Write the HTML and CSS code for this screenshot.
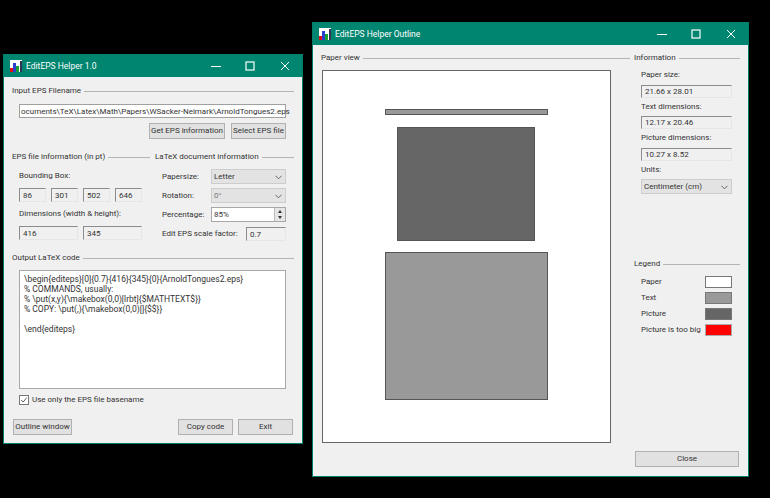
FILE: index.html
```html
<!DOCTYPE html>
<html lang="en">
<head>
  <meta charset="UTF-8">
  <title>EditEPS Helper</title>
  <link rel="stylesheet" href="styles.css">
</head>
<body>
  <svg width="0" height="0" class="defs">
    <symbol id="appIcon" viewBox="0 0 12 12">
      <rect width="12" height="12" fill="#fff"/>
      <rect x="0" y="8" width="4" height="4" fill="#e01010"/>
      <rect x="3" y="3" width="3" height="9" fill="#2a3fd0"/>
      <rect x="6" y="6" width="3" height="6" fill="#18a030"/>
      <rect x="10" y="1" width="2" height="11" fill="#335"/>
    </symbol>
    <symbol id="winMin" viewBox="0 0 10 10"><path d="M0 5.5h10" stroke="#fff" fill="none"/></symbol>
    <symbol id="winMax" viewBox="0 0 10 10"><rect x="1" y="1" width="8" height="8" stroke="#fff" stroke-width="1.2" fill="none"/></symbol>
    <symbol id="winClose" viewBox="0 0 10 10"><path d="M1 1l8 8M9 1l-8 8" stroke="#fff" fill="none"/></symbol>
    <symbol id="chevron" viewBox="0 0 8 5"><path d="M.5 .5l3.5 3.5 3.5-3.5" stroke="#555" fill="none"/></symbol>
  </svg>

  <div class="window main-window">
    <div class="titlebar">
      <svg class="app-icon"><use href="#appIcon"/></svg>
      <span class="title">EditEPS Helper 1.0</span>
      <span class="win-btn"><svg><use href="#winMin"/></svg></span>
      <span class="win-btn"><svg><use href="#winMax"/></svg></span>
      <span class="win-btn"><svg><use href="#winClose"/></svg></span>
    </div>
    <div class="main-body">
      <div class="group-title"><span>Input EPS Filename</span></div>
      <div class="file-input">ocuments\TeX\Latex\Math\Papers\WSacker-Neimark\ArnoldTongues2.eps</div>
      <div class="file-buttons">
        <button class="btn btn-info">Get EPS information</button>
        <button class="btn btn-select">Select EPS file</button>
      </div>

      <div class="info-cols">
        <div>
          <div class="group-title"><span>EPS file information (in pt)</span></div>
          <div class="indent">
            <div class="label bbox-label">Bounding Box:</div>
            <div class="field-row four">
              <div class="field">86</div>
              <div class="field">301</div>
              <div class="field">502</div>
              <div class="field">646</div>
            </div>
            <div class="label dim-label">Dimensions (width &amp; height):</div>
            <div class="field-row two">
              <div class="field">416</div>
              <div class="field">345</div>
            </div>
          </div>
        </div>
        <div>
          <div class="group-title"><span>LaTeX document information</span></div>
          <div class="doc-form">
            <div class="label">Papersize:</div>
            <div class="combo">Letter<svg class="chev"><use href="#chevron"/></svg></div>
            <div class="label">Rotation:</div>
            <div class="combo combo-off">0°<svg class="chev"><use href="#chevron"/></svg></div>
            <div class="label">Percentage:</div>
            <div class="spin">85%
              <span class="spin-arrows"><span class="up"></span><span class="down"></span></span>
            </div>
            <div class="label">Edit EPS scale factor:</div>
            <div class="field scale">0.7</div>
          </div>
        </div>
      </div>

      <div class="group-title output-title"><span>Output LaTeX code</span></div>
      <pre class="code">\begin{editeps}[0]{0.7}{416}{345}{0}{ArnoldTongues2.eps}
% COMMANDS, usually:
% \put(x,y){\makebox(0,0)[lrbt]{$MATHTEXT$}}
% COPY: \put(,){\makebox(0,0)[]{$$}}

\end{editeps}</pre>
      <div class="check-row">
        <span class="checkbox"><svg viewBox="0 0 10 10"><path d="M1.5 5l2.5 2.5 4.5-5.5" stroke="#333" fill="none"/></svg></span>
        Use only the EPS file basename
      </div>
      <div class="main-footer">
        <button class="btn btn-outline">Outline window</button>
        <button class="btn btn-action push">Copy code</button>
        <button class="btn btn-action">Exit</button>
      </div>
    </div>
  </div>

  <div class="window outline-window">
    <div class="titlebar">
      <svg class="app-icon"><use href="#appIcon"/></svg>
      <span class="title">EditEPS Helper Outline</span>
      <span class="win-btn"><svg><use href="#winMin"/></svg></span>
      <span class="win-btn"><svg><use href="#winMax"/></svg></span>
      <span class="win-btn"><svg><use href="#winClose"/></svg></span>
    </div>
    <div class="outline-body">
      <div>
        <div class="group-title"><span>Paper view</span></div>
        <div class="paper">
          <div class="shape text-strip"></div>
          <div class="shape picture-box"></div>
          <div class="shape text-box"></div>
        </div>
      </div>
      <div class="side">
        <div class="group-title"><span>Information</span></div>
        <div class="side-inner">
          <div class="label side-label">Paper size:</div>
          <div class="field side-field">21.66 x 28.01</div>
          <div class="label side-label">Text dimensions:</div>
          <div class="field side-field">12.17 x 20.46</div>
          <div class="label side-label">Picture dimensions:</div>
          <div class="field side-field">10.27 x 8.52</div>
          <div class="label side-label">Units:</div>
          <div class="combo side-field">Centimeter (cm)<svg class="chev"><use href="#chevron"/></svg></div>
        </div>
        <div class="group-title legend-title"><span>Legend</span></div>
        <div class="side-inner legend">
          <div class="legend-row">Paper<span class="swatch sw-paper"></span></div>
          <div class="legend-row">Text<span class="swatch sw-text"></span></div>
          <div class="legend-row">Picture<span class="swatch sw-picture"></span></div>
          <div class="legend-row">Picture is too big<span class="swatch sw-big"></span></div>
        </div>
        <button class="btn btn-close">Close</button>
      </div>
    </div>
  </div>
</body>
</html>
```

FILE: styles.css
```css
* {
  box-sizing: border-box;
}
html, body {
  height: 100%;
}
body {
  margin: 0;
  background-color: #000;
  color: #333;
  font-family: Roboto, Arial, sans-serif;
  font-size: 8px;
  line-height: 12px;
  overflow: hidden;
}
.defs {
  position: absolute;
}

/* windows sit on the desktop */
.window {
  position: absolute;
  display: flex;
  flex-direction: column;
  background-color: #f0f0f0;
  border: 1px solid #00806c;
}
.main-window {
  left: 3px;
  top: 54px;
  width: 300px;
  height: 390px;
}
.outline-window {
  left: 312px;
  top: 22px;
  width: 437px;
  height: 455px;
}
.titlebar {
  display: flex;
  align-items: center;
  flex: none;
  height: 22px;
  padding-left: 6px;
  background-color: #008570;
  color: #fff;
}
.app-icon {
  width: 12px;
  height: 12px;
  margin-right: 4px;
}
.title {
  flex: 1;
  font-size: 8.5px;
}
.win-btn {
  display: flex;
  align-items: center;
  justify-content: center;
  width: 34.5px;
}
.win-btn svg {
  width: 10px;
  height: 10px;
}

.group-title {
  display: flex;
  align-items: center;
  height: 12px;
  gap: 3px;
  white-space: nowrap;
}
.group-title::after {
  content: "";
  flex: 1;
  height: 1px;
  background-color: #b4b4b4;
}

.label {
  white-space: nowrap;
}
.field {
  height: 14px;
  padding: 0 3px;
  line-height: 13px;
  background-color: #f0f0f0;
  border: 1px solid #e6e6e6;
  border-top: 1px solid #8c8c8c;
  border-left: 1px solid #8c8c8c;
  white-space: nowrap;
}
.combo {
  position: relative;
  height: 15px;
  padding-left: 2px;
  line-height: 14px;
  background-color: #e3e3e3;
  border: 1px solid #cdcdcd;
}
.combo-off {
  color: #777;
}
.chev {
  position: absolute;
  right: 3px;
  top: 5px;
  width: 7px;
  height: 5px;
}
.btn {
  height: 16px;
  padding: 0;
  font-family: inherit;
  font-size: 8px;
  line-height: 12px;
  white-space: nowrap;
  color: #333;
  background-color: #e1e1e1;
  border: 1px solid #b0b0b0;
}

.main-body {
  flex: 1;
  padding: 8px 8px 0;
}
.file-input {
  height: 14px;
  margin: 7px 8px 0 7px;
  padding-left: 1px;
  line-height: 13px;
  background-color: #fff;
  border: 1px solid #a0a0a0;
  white-space: nowrap;
}
.file-buttons {
  display: flex;
  justify-content: flex-end;
  gap: 6px;
  margin: 5px 8px 0 0;
}
.btn-info {
  width: 76px;
}
.btn-select {
  width: 55px;
}
.info-cols {
  display: grid;
  grid-template-columns: 138px 139px;
  gap: 5px;
  margin-top: 12px;
}
.indent {
  padding-left: 7px;
}
.bbox-label {
  margin-top: 7px;
}
.dim-label {
  margin-top: 6px;
}
.field-row {
  display: grid;
  gap: 5px;
  width: 123px;
  margin-top: 6px;
}
.four {
  grid-template-columns: repeat(4, 1fr);
}
.two {
  grid-template-columns: repeat(2, 1fr);
}
.doc-form {
  display: grid;
  grid-template-columns: 49px 75px;
  grid-auto-rows: 15px;
  row-gap: 4px;
  align-items: center;
  margin: 6px 0 0 7px;
}
.spin {
  position: relative;
  height: 15px;
  padding-left: 2px;
  line-height: 14px;
  background-color: #fff;
  border: 1px solid #a8a8a8;
}
.spin-arrows {
  position: absolute;
  right: 0;
  top: 0;
  display: flex;
  flex-direction: column;
  width: 11px;
  height: 13px;
  background-color: #e6e6e6;
  border-left: 1px solid #bbb;
}
.spin-arrows span {
  flex: 1;
  position: relative;
}
.spin-arrows span::after {
  content: "";
  position: absolute;
  left: 2.5px;
  top: 1.5px;
  border-left: 2.5px solid transparent;
  border-right: 2.5px solid transparent;
}
.spin-arrows .up::after {
  border-bottom: 3px solid #333;
}
.spin-arrows .down::after {
  border-top: 3px solid #333;
}
.scale {
  width: 40px;
  margin-left: 35px;
}
.output-title {
  margin-top: 11px;
}
.code {
  height: 119px;
  margin: 6px 8px 0 7px;
  padding: 3px 4px;
  font-family: inherit;
  font-size: 8.5px;
  line-height: 10px;
  background-color: #fff;
  border: 1px solid #a8a8a8;
  overflow: hidden;
}
.check-row {
  display: flex;
  align-items: center;
  gap: 3px;
  height: 10px;
  margin: 6px 0 0 7px;
}
.checkbox {
  width: 10px;
  height: 10px;
  background-color: #fff;
  border: 1px solid #777;
}
.checkbox svg {
  display: block;
  width: 8px;
  height: 8px;
}
.main-footer {
  display: flex;
  gap: 5px;
  margin: 14px 1px 0;
}
.btn-outline {
  width: 59px;
}
.btn-action {
  width: 55px;
}
.push {
  margin-left: auto;
}

.outline-body {
  flex: 1;
  display: grid;
  grid-template-columns: 309px 106px;
  gap: 4px;
  padding: 7px 8px 9px;
}
.paper {
  position: relative;
  width: 289px;
  height: 373px;
  margin: 6px 0 0 1px;
  background-color: #fff;
  border: 1px solid #666;
}
.shape {
  position: absolute;
  border: 1px solid #555;
}
.text-strip {
  left: 62px;
  top: 38px;
  width: 163px;
  height: 6px;
  background-color: #999;
}
.picture-box {
  left: 74px;
  top: 56px;
  width: 138px;
  height: 114px;
  background-color: #666;
}
.text-box {
  left: 62px;
  top: 181px;
  width: 163px;
  height: 148px;
  background-color: #999;
}
.side {
  display: flex;
  flex-direction: column;
}
.side-inner {
  margin: 0 8px 0 7px;
}
.side-label {
  margin-top: 3px;
}
.side-label:first-child {
  margin-top: 5px;
}
.side-field {
  height: 13px;
  margin-top: 3.5px;
  line-height: 12px;
}
.combo.side-field {
  height: 15px;
  line-height: 14px;
}
.legend-title {
  margin-top: 64px;
}
.legend {
  display: flex;
  flex-direction: column;
  gap: 4px;
  margin-top: 6px;
}
.legend-row {
  display: flex;
  align-items: center;
  justify-content: space-between;
  height: 12px;
  white-space: nowrap;
}
.swatch {
  width: 27px;
  height: 12px;
  border: 1px solid #777;
}
.sw-paper {
  background-color: #fff;
}
.sw-text {
  background-color: #999;
}
.sw-picture {
  background-color: #666;
}
.sw-big {
  background-color: #f00;
  border-color: #aaa;
}
.btn-close {
  width: 104px;
  margin: auto 0 0 1px;
}
```
